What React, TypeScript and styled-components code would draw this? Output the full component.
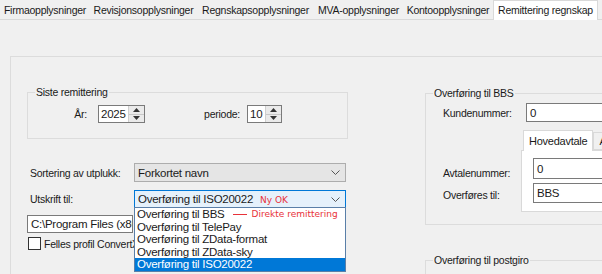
import React from "react";
import styled, { createGlobalStyle } from "styled-components";

const Global = createGlobalStyle`
  html, body { margin: 0; padding: 0; background: #f0f0f0; }
  body {
    font-family: "Liberation Sans", Arial, sans-serif;
    font-size: 10.5px;
    letter-spacing: -0.25px;
    color: #1a1a1a;
  }
  * { box-sizing: border-box; }
`;

const Window = styled.div`
  width: 602px;
  height: 274px;
  overflow: hidden;
  display: flex;
  flex-direction: column;
  background: #f0f0f0;
`;

const TabStrip = styled.div`
  display: flex;
  align-items: flex-start;
  height: 20px;
  flex-shrink: 0;
  border-bottom: 1px solid #d9d9d9;
`;

const Tab = styled.div<{ $w: number; $active?: boolean }>`
  width: ${(p) => p.$w}px;
  flex-shrink: 0;
  height: ${(p) => (p.$active ? 20 : 19)}px;
  display: flex;
  align-items: center;
  justify-content: center;
  white-space: nowrap;
  background: ${(p) => (p.$active ? "#ffffff" : "#f0f0f0")};
  border: 1px solid ${(p) => (p.$active ? "#d9d9d9" : "transparent")};
  border-bottom: none;
  padding-bottom: ${(p) => (p.$active ? 1 : 0)}px;
`;

const TabPage = styled.div`
  flex: 1;
  display: flex;
  padding: 36px 0 0 10px;
  min-height: 0;
`;

const OuterPanel = styled.div`
  flex: 1;
  display: flex;
  align-items: flex-start;
  border-top: 1px solid #dcdcdc;
  border-left: 1px solid #dcdcdc;
`;

const LeftCol = styled.div`
  width: 414px;
  flex-shrink: 0;
  padding-left: 16px;
  display: flex;
  flex-direction: column;
`;

const RightCol = styled.div`
  flex-shrink: 0;
  display: flex;
  flex-direction: column;
`;

const GroupBox = styled.div<{ $w: number; $h: number; $mt: number }>`
  position: relative;
  flex-shrink: 0;
  width: ${(p) => p.$w}px;
  height: ${(p) => p.$h}px;
  margin-top: ${(p) => p.$mt}px;
  border: 1px solid #dcdcdc;
`;

const GroupTitle = styled.span`
  position: absolute;
  top: -7px;
  left: 7px;
  padding: 0 1px;
  line-height: 13px;
  background: #f0f0f0;
  white-space: nowrap;
`;

const SpinRow = styled.div`
  display: flex;
  align-items: center;
  height: 18px;
  margin-top: 12px;
`;

const RightLabel = styled.span<{ $w: number; $gap: number }>`
  width: ${(p) => p.$w}px;
  margin-right: ${(p) => p.$gap}px;
  text-align: right;
  white-space: nowrap;
  flex-shrink: 0;
`;

const Spin = styled.div<{ $w: number }>`
  width: ${(p) => p.$w}px;
  height: 18px;
  display: flex;
  border: 1px solid #7a7a7a;
  background: #fff;
  flex-shrink: 0;
`;

const SpinValue = styled.span`
  flex: 1;
  padding-left: 2px;
  line-height: 16px;
  font-size: 11.5px;
`;

const SpinButtons = styled.div`
  width: 16px;
  display: flex;
  flex-direction: column;
  border-left: 1px solid #cfcfcf;
`;

const SpinBtn = styled.div<{ $bottom?: boolean }>`
  flex: 1;
  display: flex;
  align-items: center;
  justify-content: center;
  background: #eaeaea;
  border-top: ${(p) => (p.$bottom ? "1px solid #c8c8c8" : "none")};
`;

const FormRow = styled.div<{ $mt: number; $h: number }>`
  display: flex;
  align-items: center;
  margin-top: ${(p) => p.$mt}px;
  height: ${(p) => p.$h}px;
  flex-shrink: 0;
`;

const RowLabel = styled.span`
  width: 107px;
  padding-left: 3px;
  white-space: nowrap;
  flex-shrink: 0;
`;

const Combo = styled.div<{ $focused?: boolean; $w: number; $h: number }>`
  position: relative;
  width: ${(p) => p.$w}px;
  height: ${(p) => p.$h}px;
  display: flex;
  align-items: center;
  padding: 0 0 0 3px;
  white-space: nowrap;
  font-size: 11.5px;
  background: ${(p) => (p.$focused ? "#e5f1fb" : "#e5e5e5")};
  border: 1px solid ${(p) => (p.$focused ? "#0078d7" : "#adadad")};
  flex-shrink: 0;
`;

const ComboWhite = styled(Combo)`
  background: #fff;
  border-color: #7a7a7a;
`;

const ComboText = styled.span`
  flex: 1;
  overflow: hidden;
`;

const Chevron = styled.svg`
  width: 9px;
  height: 5px;
  margin-right: 5px;
  flex-shrink: 0;
`;

const RedNote = styled.span<{ $ml: number }>`
  font-family: "DejaVu Sans", Verdana, sans-serif;
  font-size: 9px;
  letter-spacing: 0;
  color: #e8323a;
  margin-left: ${(p) => p.$ml}px;
`;

const DropList = styled.div`
  position: absolute;
  top: 100%;
  left: -1px;
  width: 212px;
  border: 1px solid #5a7fa8;
  background: #fff;
  z-index: 5;
  display: flex;
  flex-direction: column;
`;

const DropItem = styled.div<{ $selected?: boolean }>`
  height: 12.6px;
  line-height: 12.6px;
  padding-left: 2px;
  font-size: 11.5px;
  white-space: nowrap;
  display: flex;
  align-items: center;
  background: ${(p) => (p.$selected ? "#0078d7" : "transparent")};
  color: ${(p) => (p.$selected ? "#fff" : "#1a1a1a")};
`;

const Arrow = styled.span`
  display: inline-block;
  width: 14px;
  height: 1px;
  background: #e8323a;
  margin-left: 8px;
`;

const TextInput = styled.div<{ $w: number; $h: number }>`
  width: ${(p) => p.$w}px;
  height: ${(p) => p.$h}px;
  border: 1px solid #7a7a7a;
  background: #fff;
  padding-left: 3px;
  display: flex;
  align-items: center;
  white-space: nowrap;
  overflow: hidden;
  font-size: 11.5px;
  flex-shrink: 0;
`;

const CheckRow = styled.div`
  display: flex;
  align-items: center;
  margin-top: 4px;
  height: 13px;
  padding-left: 1px;
  white-space: nowrap;
`;

const CheckBox = styled.span`
  width: 13px;
  height: 13px;
  border: 1px solid #333;
  background: #fff;
  margin-right: 3px;
  flex-shrink: 0;
`;

const BbsKundeRow = styled.div`
  display: flex;
  align-items: center;
  margin: 9px 0 0 17px;
  height: 19px;
`;

const BbsLabel = styled.span<{ $w: number }>`
  width: ${(p) => p.$w}px;
  white-space: nowrap;
  flex-shrink: 0;
`;

const BbsBody = styled.div`
  display: flex;
  margin: 8px 0 0 17px;
`;

const LabelStack = styled.div`
  width: 78px;
  padding-top: 36px;
  display: flex;
  flex-direction: column;
  gap: 8px;
  flex-shrink: 0;
`;

const StackLabel = styled.span`
  line-height: 14px;
  white-space: nowrap;
`;

const InnerTabs = styled.div`
  display: flex;
  flex-direction: column;
  width: 120px;
`;

const InnerTabHeaders = styled.div`
  display: flex;
  align-items: flex-end;
  height: 20px;
  padding-left: 2px;
  overflow: visible;
`;

const InnerTab = styled.div<{ $active?: boolean }>`
  height: ${(p) => (p.$active ? 21 : 18)}px;
  margin-bottom: ${(p) => (p.$active ? -1 : 0)}px;
  padding: 0 5px;
  display: flex;
  align-items: center;
  white-space: nowrap;
  font-size: 11px;
  flex-shrink: 0;
  background: ${(p) => (p.$active ? "#fff" : "#f0f0f0")};
  border: 1px solid #d9d9d9;
  border-bottom: ${(p) => (p.$active ? "none" : "1px solid #d9d9d9")};
  position: relative;
  z-index: ${(p) => (p.$active ? 2 : 1)};
`;

const InnerTabPage = styled.div`
  height: 62px;
  border: 1px solid #d9d9d9;
  background: #fff;
  padding: 7px 0 0 11px;
  display: flex;
  flex-direction: column;
  gap: 4px;
`;

const UpArrow = () => (
  <svg width="7" height="4" viewBox="0 0 7 4">
    <polygon points="0,4 3.5,0 7,4" fill="#333" />
  </svg>
);
const DownArrow = () => (
  <svg width="7" height="4" viewBox="0 0 7 4">
    <polygon points="0,0 3.5,4 7,0" fill="#333" />
  </svg>
);
const ChevronIcon = () => (
  <Chevron viewBox="0 0 9 5">
    <polyline points="0.5,0.5 4.5,4.5 8.5,0.5" fill="none" stroke="#555" strokeWidth="1" />
  </Chevron>
);

const tabs = [
  { label: "Firmaopplysninger", w: 90 },
  { label: "Revisjonsopplysninger", w: 107 },
  { label: "Regnskapsopplysninger", w: 117 },
  { label: "MVA-opplysninger", w: 89 },
  { label: "Kontoopplysninger", w: 90 },
  { label: "Remittering regnskap", w: 105, active: true },
];

const options = [
  "Overføring til BBS",
  "Overføring til TelePay",
  "Overføring til ZData-format",
  "Overføring til ZData-sky",
  "Overføring til ISO20022",
];

export default function App() {
  return (
    <Window>
      <Global />
      <TabStrip>
        {tabs.map((t) => (
          <Tab key={t.label} $w={t.w} $active={t.active}>
            {t.label}
          </Tab>
        ))}
      </TabStrip>
      <TabPage>
        <OuterPanel>
          <LeftCol>
            <GroupBox $w={321} $h={47} $mt={35}>
              <GroupTitle>Siste remittering</GroupTitle>
              <SpinRow>
                <RightLabel $w={59} $gap={11}>År:</RightLabel>
                <Spin $w={47}>
                  <SpinValue>2025</SpinValue>
                  <SpinButtons>
                    <SpinBtn><UpArrow /></SpinBtn>
                    <SpinBtn $bottom><DownArrow /></SpinBtn>
                  </SpinButtons>
                </Spin>
                <RightLabel $w={95} $gap={7}>periode:</RightLabel>
                <Spin $w={35}>
                  <SpinValue>10</SpinValue>
                  <SpinButtons>
                    <SpinBtn><UpArrow /></SpinBtn>
                    <SpinBtn $bottom><DownArrow /></SpinBtn>
                  </SpinButtons>
                </Spin>
              </SpinRow>
            </GroupBox>

            <FormRow $mt={24} $h={19}>
              <RowLabel>Sortering av utplukk:</RowLabel>
              <Combo $w={212} $h={19}>
                <ComboText>Forkortet navn</ComboText>
                <ChevronIcon />
              </Combo>
            </FormRow>

            <FormRow $mt={8} $h={18}>
              <RowLabel>Utskrift til:</RowLabel>
              <Combo $w={212} $h={18} $focused>
                <ComboText>
                  Overføring til ISO20022<RedNote $ml={7}>Ny OK</RedNote>
                </ComboText>
                <ChevronIcon />
                <DropList>
                  {options.map((o, i) => (
                    <DropItem key={o} $selected={i === options.length - 1}>
                      {o}
                      {i === 0 && (
                        <>
                          <Arrow />
                          <RedNote $ml={5}>Direkte remittering</RedNote>
                        </>
                      )}
                    </DropItem>
                  ))}
                </DropList>
              </Combo>
            </FormRow>

            <FormRow $mt={7} $h={18}>
              <TextInput $w={106} $h={18}>C:\Program Files (x86)\V</TextInput>
            </FormRow>

            <CheckRow>
              <CheckBox />
              Felles profil ConvertX
            </CheckRow>
          </LeftCol>

          <RightCol>
            <GroupBox $w={200} $h={132} $mt={36}>
              <GroupTitle>Overføring til BBS</GroupTitle>
              <BbsKundeRow>
                <BbsLabel $w={83}>Kundenummer:</BbsLabel>
                <TextInput $w={100} $h={19}>0</TextInput>
              </BbsKundeRow>
              <BbsBody>
                <LabelStack>
                  <StackLabel>Avtalenummer:</StackLabel>
                  <StackLabel>Overføres til:</StackLabel>
                </LabelStack>
                <InnerTabs>
                  <InnerTabHeaders>
                    <InnerTab $active>Hovedavtale</InnerTab>
                    <InnerTab>Avtale 2</InnerTab>
                  </InnerTabHeaders>
                  <InnerTabPage>
                    <TextInput $w={100} $h={21}>0</TextInput>
                    <ComboWhite $w={100} $h={20}>
                      <ComboText>BBS</ComboText>
                      <ChevronIcon />
                    </ComboWhite>
                  </InnerTabPage>
                </InnerTabs>
              </BbsBody>
            </GroupBox>
            <GroupBox $w={200} $h={60} $mt={35}>
              <GroupTitle>Overføring til postgiro</GroupTitle>
            </GroupBox>
          </RightCol>
        </OuterPanel>
      </TabPage>
    </Window>
  );
}
